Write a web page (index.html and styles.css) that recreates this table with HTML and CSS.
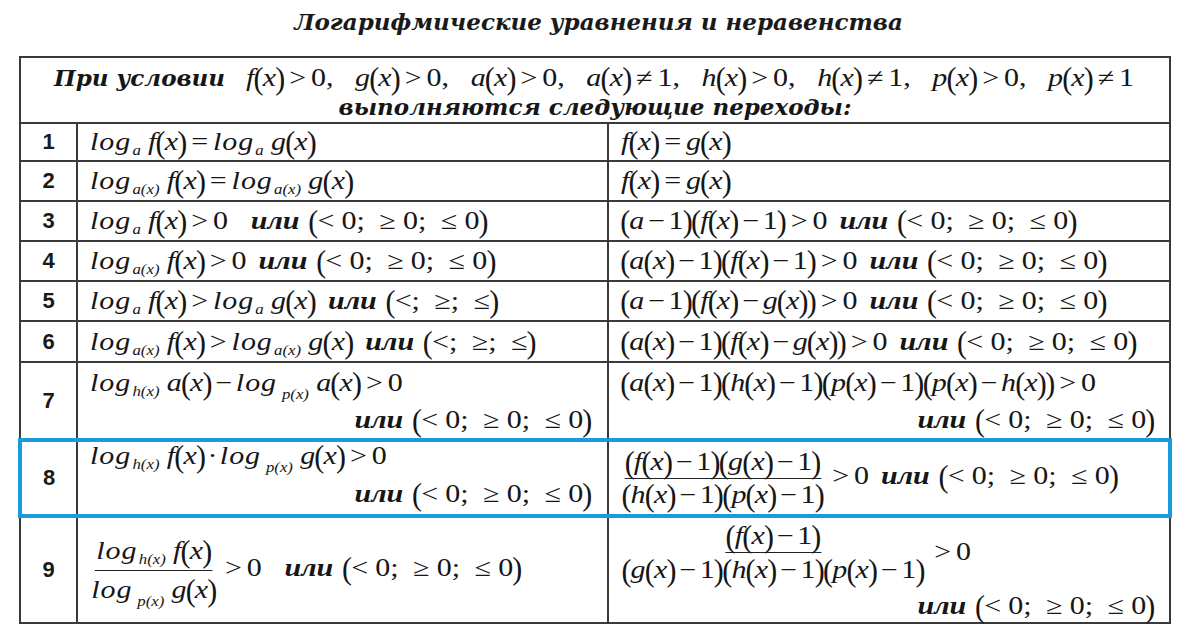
FILE: index.html
```html
<!DOCTYPE html>
<html lang="ru">
<head>
<meta charset="utf-8">
<title>Логарифмические уравнения и неравенства</title>
<link rel="stylesheet" href="styles.css">
</head>
<body>
<h1 class="title">Логарифмические уравнения и неравенства</h1>
<table class="tbl">
<colgroup><col class="cn"><col class="cl"><col class="cr"></colgroup>
<tr class="hd">
<td colspan="3">
<div class="hline1"><span class="hb">При условии</span><span class="m hm"><i>f</i><span class="br">(</span><i>x</i><span class="br">)</span><span class="o">&gt;</span>0,<span class="c"></span><i>g</i><span class="br">(</span><i>x</i><span class="br">)</span><span class="o">&gt;</span>0,<span class="c"></span><i>a</i><span class="br">(</span><i>x</i><span class="br">)</span><span class="o">&gt;</span>0,<span class="c"></span><i>a</i><span class="br">(</span><i>x</i><span class="br">)</span><span class="o">≠</span>1,<span class="c"></span><i>h</i><span class="br">(</span><i>x</i><span class="br">)</span><span class="o">&gt;</span>0,<span class="c"></span><i>h</i><span class="br">(</span><i>x</i><span class="br">)</span><span class="o">≠</span>1,<span class="c"></span><i>p</i><span class="br">(</span><i>x</i><span class="br">)</span><span class="o">&gt;</span>0,<span class="c"></span><i>p</i><span class="br">(</span><i>x</i><span class="br">)</span><span class="o">≠</span>1</span></div>
<div class="hline2">выполняются следующие переходы:</div>
</td>
</tr>
<tr class="row s1">
<td class="n">1</td>
<td class="cell"><div class="m"><i class="lg">log</i><sub><i>a</i></sub><i>f</i><span class="br">(</span><i>x</i><span class="br">)</span><span class="o">=</span><i class="lg">log</i><sub><i>a</i></sub><i>g</i><span class="br">(</span><i>x</i><span class="br">)</span></div></td>
<td class="cell"><div class="m"><i>f</i><span class="br">(</span><i>x</i><span class="br">)</span><span class="o">=</span><i>g</i><span class="br">(</span><i>x</i><span class="br">)</span></div></td>
</tr>
<tr class="row s2">
<td class="n">2</td>
<td class="cell"><div class="m"><i class="lg">log</i><sub><i>a</i>(<i>x</i>)</sub><i>f</i><span class="br">(</span><i>x</i><span class="br">)</span><span class="o">=</span><i class="lg">log</i><sub><i>a</i>(<i>x</i>)</sub><i>g</i><span class="br">(</span><i>x</i><span class="br">)</span></div></td>
<td class="cell"><div class="m"><i>f</i><span class="br">(</span><i>x</i><span class="br">)</span><span class="o">=</span><i>g</i><span class="br">(</span><i>x</i><span class="br">)</span></div></td>
</tr>
<tr class="row s2">
<td class="n">3</td>
<td class="cell"><div class="m"><i class="lg">log</i><sub><i>a</i></sub><i>f</i><span class="br">(</span><i>x</i><span class="br">)</span><span class="o">&gt;</span>0<span class="or wide">или</span><span class="br">(</span><span class="r">&lt;</span>0;<span class="r g">≥</span>0;<span class="r g">≤</span>0<span class="br">)</span></div></td>
<td class="cell"><div class="m"><span class="br">(</span><i>a</i><span class="o mi">−</span>1<span class="br">)</span><span class="br">(</span><i>f</i><span class="br">(</span><i>x</i><span class="br">)</span><span class="o mi">−</span>1<span class="br">)</span><span class="o">&gt;</span>0<span class="or">или</span><span class="br">(</span><span class="r">&lt;</span>0;<span class="r g">≥</span>0;<span class="r g">≤</span>0<span class="br">)</span></div></td>
</tr>
<tr class="row s2">
<td class="n">4</td>
<td class="cell"><div class="m"><i class="lg">log</i><sub><i>a</i>(<i>x</i>)</sub><i>f</i><span class="br">(</span><i>x</i><span class="br">)</span><span class="o">&gt;</span>0<span class="or">или</span><span class="br">(</span><span class="r">&lt;</span>0;<span class="r g">≥</span>0;<span class="r g">≤</span>0<span class="br">)</span></div></td>
<td class="cell"><div class="m"><span class="br">(</span><i>a</i><span class="br">(</span><i>x</i><span class="br">)</span><span class="o mi">−</span>1<span class="br">)</span><span class="br">(</span><i>f</i><span class="br">(</span><i>x</i><span class="br">)</span><span class="o mi">−</span>1<span class="br">)</span><span class="o">&gt;</span>0<span class="or">или</span><span class="br">(</span><span class="r">&lt;</span>0;<span class="r g">≥</span>0;<span class="r g">≤</span>0<span class="br">)</span></div></td>
</tr>
<tr class="row s2">
<td class="n">5</td>
<td class="cell"><div class="m"><i class="lg">log</i><sub><i>a</i></sub><i>f</i><span class="br">(</span><i>x</i><span class="br">)</span><span class="o">&gt;</span><i class="lg">log</i><sub><i>a</i></sub><i>g</i><span class="br">(</span><i>x</i><span class="br">)</span><span class="or">или</span><span class="br">(</span>&lt;;<span class="g">≥</span>;<span class="g">≤</span><span class="br">)</span></div></td>
<td class="cell"><div class="m"><span class="br">(</span><i>a</i><span class="o mi">−</span>1<span class="br">)</span><span class="br">(</span><i>f</i><span class="br">(</span><i>x</i><span class="br">)</span><span class="o mi">−</span><i>g</i><span class="br">(</span><i>x</i><span class="br">)</span><span class="br">)</span><span class="o">&gt;</span>0<span class="or">или</span><span class="br">(</span><span class="r">&lt;</span>0;<span class="r g">≥</span>0;<span class="r g">≤</span>0<span class="br">)</span></div></td>
</tr>
<tr class="row s3">
<td class="n">6</td>
<td class="cell"><div class="m"><i class="lg">log</i><sub><i>a</i>(<i>x</i>)</sub><i>f</i><span class="br">(</span><i>x</i><span class="br">)</span><span class="o">&gt;</span><i class="lg">log</i><sub><i>a</i>(<i>x</i>)</sub><i>g</i><span class="br">(</span><i>x</i><span class="br">)</span><span class="or">или</span><span class="br">(</span>&lt;;<span class="g">≥</span>;<span class="g">≤</span><span class="br">)</span></div></td>
<td class="cell"><div class="m"><span class="br">(</span><i>a</i><span class="br">(</span><i>x</i><span class="br">)</span><span class="o mi">−</span>1<span class="br">)</span><span class="br">(</span><i>f</i><span class="br">(</span><i>x</i><span class="br">)</span><span class="o mi">−</span><i>g</i><span class="br">(</span><i>x</i><span class="br">)</span><span class="br">)</span><span class="o">&gt;</span>0<span class="or">или</span><span class="br">(</span><span class="r">&lt;</span>0;<span class="r g">≥</span>0;<span class="r g">≤</span>0<span class="br">)</span></div></td>
</tr>
<tr class="row s7">
<td class="n">7</td>
<td class="cell"><div class="two">
<div class="m"><i class="lg">log</i><sub><i>h</i>(<i>x</i>)</sub><i>a</i><span class="br">(</span><i>x</i><span class="br">)</span><span class="o mi">−</span><i class="lg">log</i><sub class="lo"><i>p</i>(<i>x</i>)</sub><i>a</i><span class="br">(</span><i>x</i><span class="br">)</span><span class="o">&gt;</span>0</div>
<div class="m end"><span class="or">или</span><span class="br">(</span><span class="r">&lt;</span>0;<span class="r g">≥</span>0;<span class="r g">≤</span>0<span class="br">)</span></div>
</div></td>
<td class="cell"><div class="two">
<div class="m"><span class="br">(</span><i>a</i><span class="br">(</span><i>x</i><span class="br">)</span><span class="o mi">−</span>1<span class="br">)</span><span class="br">(</span><i>h</i><span class="br">(</span><i>x</i><span class="br">)</span><span class="o mi">−</span>1<span class="br">)</span><span class="br">(</span><i>p</i><span class="br">(</span><i>x</i><span class="br">)</span><span class="o mi">−</span>1<span class="br">)</span><span class="br">(</span><i>p</i><span class="br">(</span><i>x</i><span class="br">)</span><span class="o mi">−</span><i>h</i><span class="br">(</span><i>x</i><span class="br">)</span><span class="br">)</span><span class="o">&gt;</span>0</div>
<div class="m end"><span class="or">или</span><span class="br">(</span><span class="r">&lt;</span>0;<span class="r g">≥</span>0;<span class="r g">≤</span>0<span class="br">)</span></div>
</div></td>
</tr>
<tr class="row s8 hl">
<td class="n">8</td>
<td class="cell"><div class="two">
<div class="m"><i class="lg">log</i><sub><i>h</i>(<i>x</i>)</sub><i>f</i><span class="br">(</span><i>x</i><span class="br">)</span><span class="o dot">·</span><i class="lg">log</i><sub class="lo"><i>p</i>(<i>x</i>)</sub><i>g</i><span class="br">(</span><i>x</i><span class="br">)</span><span class="o">&gt;</span>0</div>
<div class="m end"><span class="or">или</span><span class="br">(</span><span class="r">&lt;</span>0;<span class="r g">≥</span>0;<span class="r g">≤</span>0<span class="br">)</span></div>
</div></td>
<td class="cell"><div class="m"><span class="frac fs"><span class="num"><span class="br">(</span><i>f</i><span class="br">(</span><i>x</i><span class="br">)</span><span class="o mi">−</span>1<span class="br">)</span><span class="br">(</span><i>g</i><span class="br">(</span><i>x</i><span class="br">)</span><span class="o mi">−</span>1<span class="br">)</span></span><span class="den"><span class="br">(</span><i>h</i><span class="br">(</span><i>x</i><span class="br">)</span><span class="o mi">−</span>1<span class="br">)</span><span class="br">(</span><i>p</i><span class="br">(</span><i>x</i><span class="br">)</span><span class="o mi">−</span>1<span class="br">)</span></span></span><span class="o">&gt;</span>0<span class="or">или</span><span class="br">(</span><span class="r">&lt;</span>0;<span class="r g">≥</span>0;<span class="r g">≤</span>0<span class="br">)</span></div></td>
</tr>
<tr class="row s9">
<td class="n">9</td>
<td class="cell"><div class="m"><span class="frac fl"><span class="num"><i class="lg">log</i><sub><i>h</i>(<i>x</i>)</sub><i>f</i><span class="br">(</span><i>x</i><span class="br">)</span></span><span class="den"><i class="lg">log</i><sub class="lo"><i>p</i>(<i>x</i>)</sub><i>g</i><span class="br">(</span><i>x</i><span class="br">)</span></span></span><span class="o">&gt;</span>0<span class="or wide">или</span><span class="br">(</span><span class="r">&lt;</span>0;<span class="r g">≥</span>0;<span class="r g">≤</span>0<span class="br">)</span></div></td>
<td class="cell"><div class="nine">
<div class="m nf"><span class="frac fr"><span class="num"><span class="br">(</span><i>f</i><span class="br">(</span><i>x</i><span class="br">)</span><span class="o mi">−</span>1<span class="br">)</span></span><span class="den"><span class="br">(</span><i>g</i><span class="br">(</span><i>x</i><span class="br">)</span><span class="o mi">−</span>1<span class="br">)</span><span class="br">(</span><i>h</i><span class="br">(</span><i>x</i><span class="br">)</span><span class="o mi">−</span>1<span class="br">)</span><span class="br">(</span><i>p</i><span class="br">(</span><i>x</i><span class="br">)</span><span class="o mi">−</span>1<span class="br">)</span></span></span><span class="o gt9">&gt;</span><span>0</span></div>
<div class="m end"><span class="or">или</span><span class="br">(</span><span class="r">&lt;</span>0;<span class="r g">≥</span>0;<span class="r g">≤</span>0<span class="br">)</span></div>
</div></td>
</tr>
</table>
</body>
</html>
```
FILE: styles.css
```css
* { box-sizing: border-box; }
html, body { margin: 0; padding: 0; background: #ffffff; }
body {
  width: 1197px;
  height: 630px;
  overflow: hidden;
  color: #161616;
  font-family: "Liberation Serif", serif;
}
.title {
  margin: 0;
  height: 56px;
  padding-top: 7px;
  text-align: center;
  font: bold italic 23px/30px "DejaVu Serif", serif;
  color: #1a1a1a;
}
.tbl {
  margin-left: 18px;
  width: 1150px;
  border-collapse: collapse;
  table-layout: fixed;
}
.cn { width: 57px; }
.cl { width: 531px; }
.cr { width: 562px; }
.tbl td {
  border: 2px solid #3a3a3a;
  padding: 0;
  vertical-align: middle;
}
.hd td { height: 66px; }
.hline1 {
  display: flex;
  justify-content: flex-start;
  align-items: baseline;
  height: 33px;
  padding-left: 33px;
}
.hb { font: bold italic 23px/33px "DejaVu Serif", serif; margin-right: 21px; }
.hline2 { text-align: center; font: bold italic 23px/26px "DejaVu Serif", serif; }
.hm { display: inline-block; line-height: 33px; transform: scaleX(1.17); }
.c { display: inline-block; width: 18px; }
.s1 td { height: 38px; }
.s2 td { height: 40px; }
.s3 td { height: 41px; }
.s7 td { height: 78px; }
.s8 td { height: 73px; }
.s9 td { height: 104px; }
.n {
  text-align: center;
  font: bold 22px "Liberation Sans", Arial, sans-serif;
  color: #1a1a1a;
}
.cell { padding: 0 15px 0 12px !important; }
.m {
  width: max-content;
  font-size: 25px;
  line-height: 30px;
  white-space: nowrap;
  transform: scaleX(1.2);
  transform-origin: 0 50%;
}
.m.end { margin-left: auto; transform-origin: 100% 50%; }
.m i { font-style: italic; }
.m i.lg { letter-spacing: 0.8px; }
.br {
  display: inline-block;
  font-style: normal;
  transform: scale(1, 1.3);
  line-height: 1;
  margin: 0 -0.7px;
}
sub {
  font-size: 14px;
  font-style: italic;
  vertical-align: -5px;
  line-height: 0;
  margin: 0 6px 0 1px;
}
sub.lo { vertical-align: -8px; margin-left: 4px; }
.o { margin: 0 4px; }
.o.mi { margin: 0 3px; }
.o.dot { margin: 0 2px; }
.r { margin-right: 6px; }
.g { margin-left: 12px; }
.or {
  font-weight: bold;
  font-style: italic;
  margin: 0 8px 0 10px;
}
.or.wide { margin-left: 19px; }
.two { display: flex; flex-direction: column; }
.s7 .two .m { height: 37px; line-height: 37px; }
.s8 .two .m:first-child { height: 28px; line-height: 28px; }
.s8 .two .m.end { height: 44px; line-height: 48px; }
.frac {
  display: inline-flex;
  flex-direction: column;
  align-items: center;
  vertical-align: middle;
  margin-right: 2px;
}
.frac .num { border-bottom: 1.5px solid #222; padding: 0 1px; }
.frac .den { padding: 0 1px; }
.fs .num, .fs .den { line-height: 32px; }
.fl .num, .fl .den { line-height: 38px; }
.fr .num, .fr .den { line-height: 33px; }
.nine { display: flex; flex-direction: column; }
.nine .nf { height: 68px; display: flex; align-items: center; }
.nine .end { height: 36px; line-height: 40px; }
.gt9 { margin-left: 5px; }
.hl td { border-top: 4px solid #1a9cdc; border-bottom: 4px solid #1a9cdc; }
.hl td:first-child { border-left: 4px solid #1a9cdc; }
.hl td:last-child { border-right: 4px solid #1a9cdc; }
```
